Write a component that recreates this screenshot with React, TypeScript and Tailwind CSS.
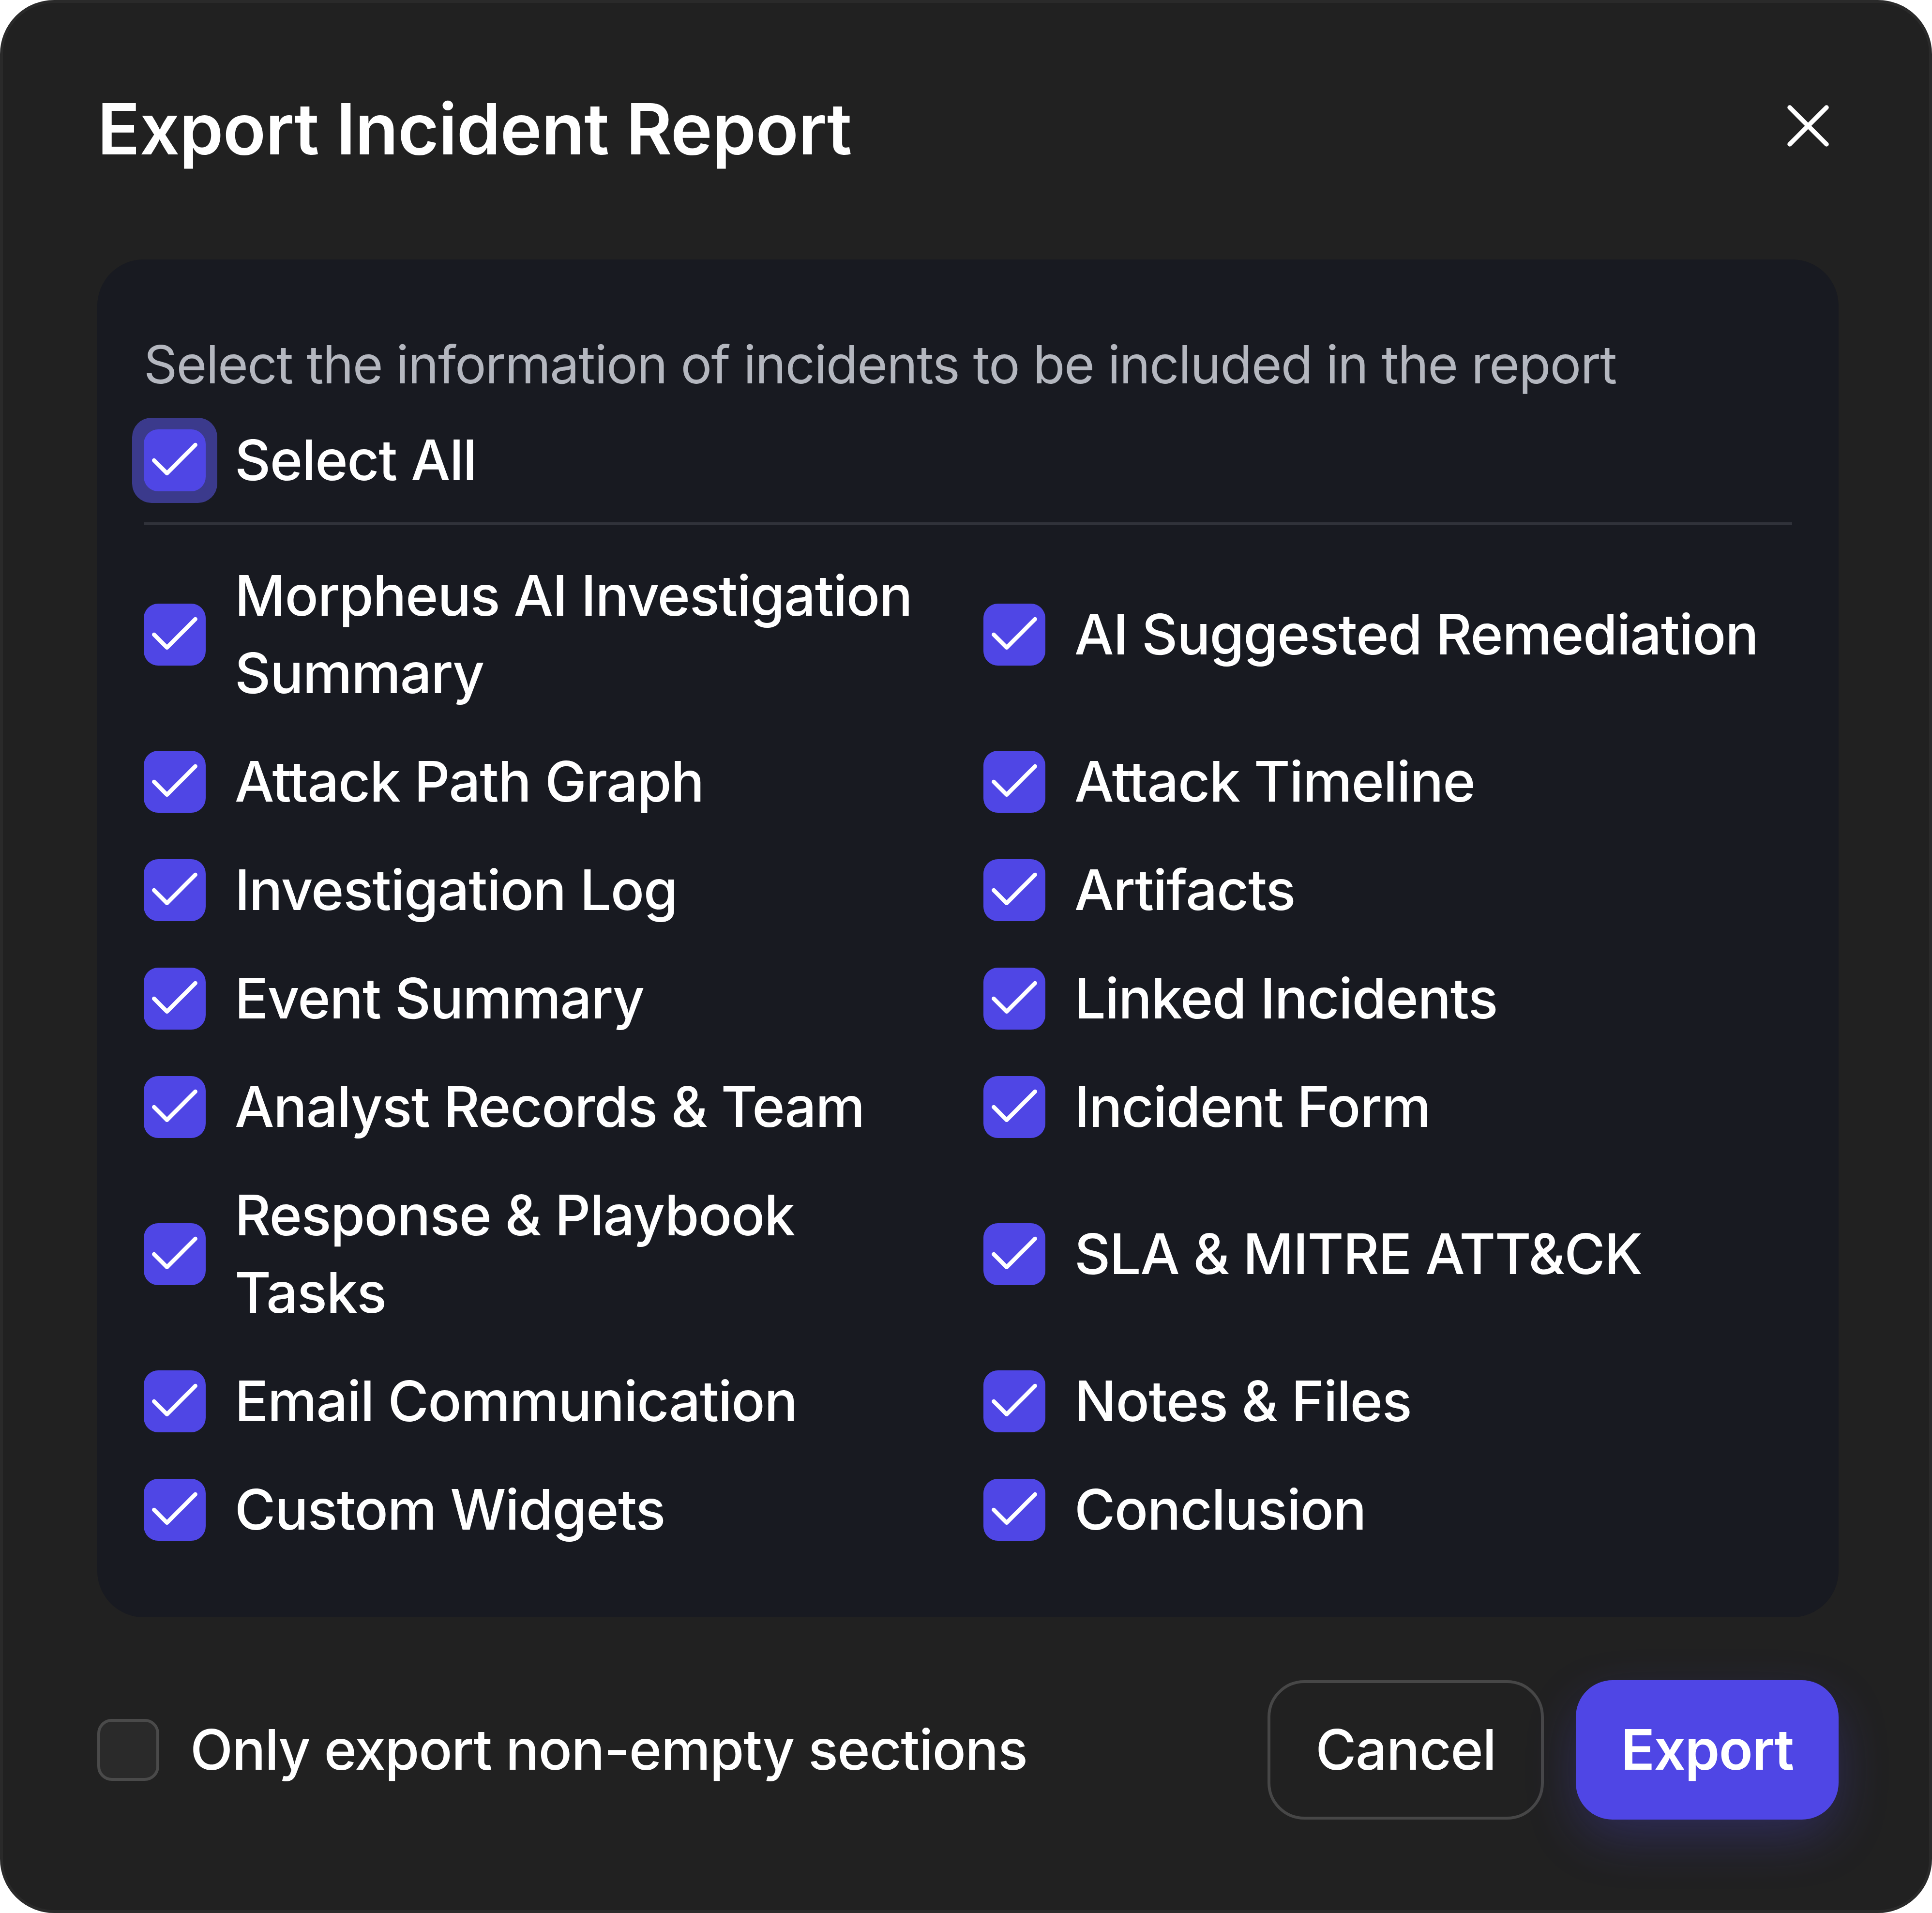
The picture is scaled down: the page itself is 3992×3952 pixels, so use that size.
import { Check, X } from "lucide-react";

const leftItems = [
  "Morpheus AI Investigation Summary",
  "Attack Path Graph",
  "Investigation Log",
  "Event Summary",
  "Analyst Records & Team",
  "Response & Playbook Tasks",
  "Email Communication",
  "Custom Widgets",
];

const rightItems = [
  "AI Suggested Remediation",
  "Attack Timeline",
  "Artifacts",
  "Linked Incidents",
  "Incident Form",
  "SLA & MITRE ATT&CK",
  "Notes & Files",
  "Conclusion",
];

function CheckBox({ checked = true }: { checked?: boolean }) {
  if (!checked) {
    return (
      <span className="block h-[128px] w-[128px] shrink-0 rounded-[30px] border-[6px] border-[#4a4a4a] bg-[#2a2a2a]" />
    );
  }
  return (
    <span className="flex h-[128px] w-[128px] shrink-0 items-center justify-center rounded-[30px] bg-[#4f46e5]">
      <Check size={128} strokeWidth={1.6} color="#ffffff" />
    </span>
  );
}

function Item({ label }: { label: string }) {
  return (
    <label className="flex items-center gap-[60px]">
      <CheckBox />
      <span className="text-[115px] font-medium leading-[160px] tracking-[-1.5px] text-white">{label}</span>
    </label>
  );
}

export default function App() {
  // interleave columns so grid rows line up
  const rows = leftItems.flatMap((l, i) => [l, rightItems[i]]);

  return (
    <div className="bg-white font-['Inter',sans-serif]">
      <div className="flex h-[3952px] w-[3992px] flex-col rounded-[112px] border-[6px] border-[#2a2a2a] bg-[#212121] pt-[160px] pr-[187px] pb-[186px] pl-[195px]">
        {/* Header */}
        <div className="flex items-start justify-between">
          <h2 className="text-[146px] font-semibold leading-[200px] tracking-[-1px] text-white">Export Incident Report</h2>
          <button className="-mr-[13px] mt-[18px] text-white" aria-label="Close">
            <X size={152} strokeWidth={1.5} />
          </button>
        </div>

        {/* Section picker */}
        <div className="mt-[170px] rounded-[96px] bg-[#181a21] px-[96px] pt-[137px] pb-[142px]">
          <p className="text-[108px] leading-[160px] tracking-[-1.8px] text-[#b4b7bf]">
            Select the information of incidents to be included in the report
          </p>
          <div className="mt-[38px] flex h-[160px] items-center gap-[60px]">
            <span className="-m-[24px] rounded-[40px] bg-[#3b3a8c] p-[24px]">
              <CheckBox />
            </span>
            <span className="text-[115px] font-medium leading-[160px] tracking-[-1.5px] text-white">Select All</span>
          </div>
          <div className="mt-[48px] h-[6px] bg-[#30323a]" />
          <div className="mt-[66px] grid grid-cols-2 gap-x-[64px] gap-y-[64px]">
            {rows.map((label) => (
              <Item key={label} label={label} />
            ))}
          </div>
        </div>

        {/* Footer */}
        <div className="mt-[130px] flex items-center justify-between">
          <label className="flex items-center gap-[64px]">
            <CheckBox checked={false} />
            <span className="text-[115px] font-medium leading-[160px] tracking-[-1.5px] text-white">
              Only export non-empty sections
            </span>
          </label>
          <div className="flex items-center gap-[66px]">
            <button className="flex h-[288px] w-[571px] items-center justify-center rounded-[76px] border-[6px] border-[#474747] text-[115px] font-medium leading-[160px] tracking-[-1.5px] text-white">
              Cancel
            </button>
            <button className="flex h-[288px] w-[543px] items-center justify-center rounded-[76px] bg-[#4f46e5] text-[115px] font-semibold leading-[160px] tracking-[-1.5px] text-white shadow-[0_40px_110px_-10px_rgba(79,70,229,0.3)]">
              Export
            </button>
          </div>
        </div>
      </div>
    </div>
  );
}
